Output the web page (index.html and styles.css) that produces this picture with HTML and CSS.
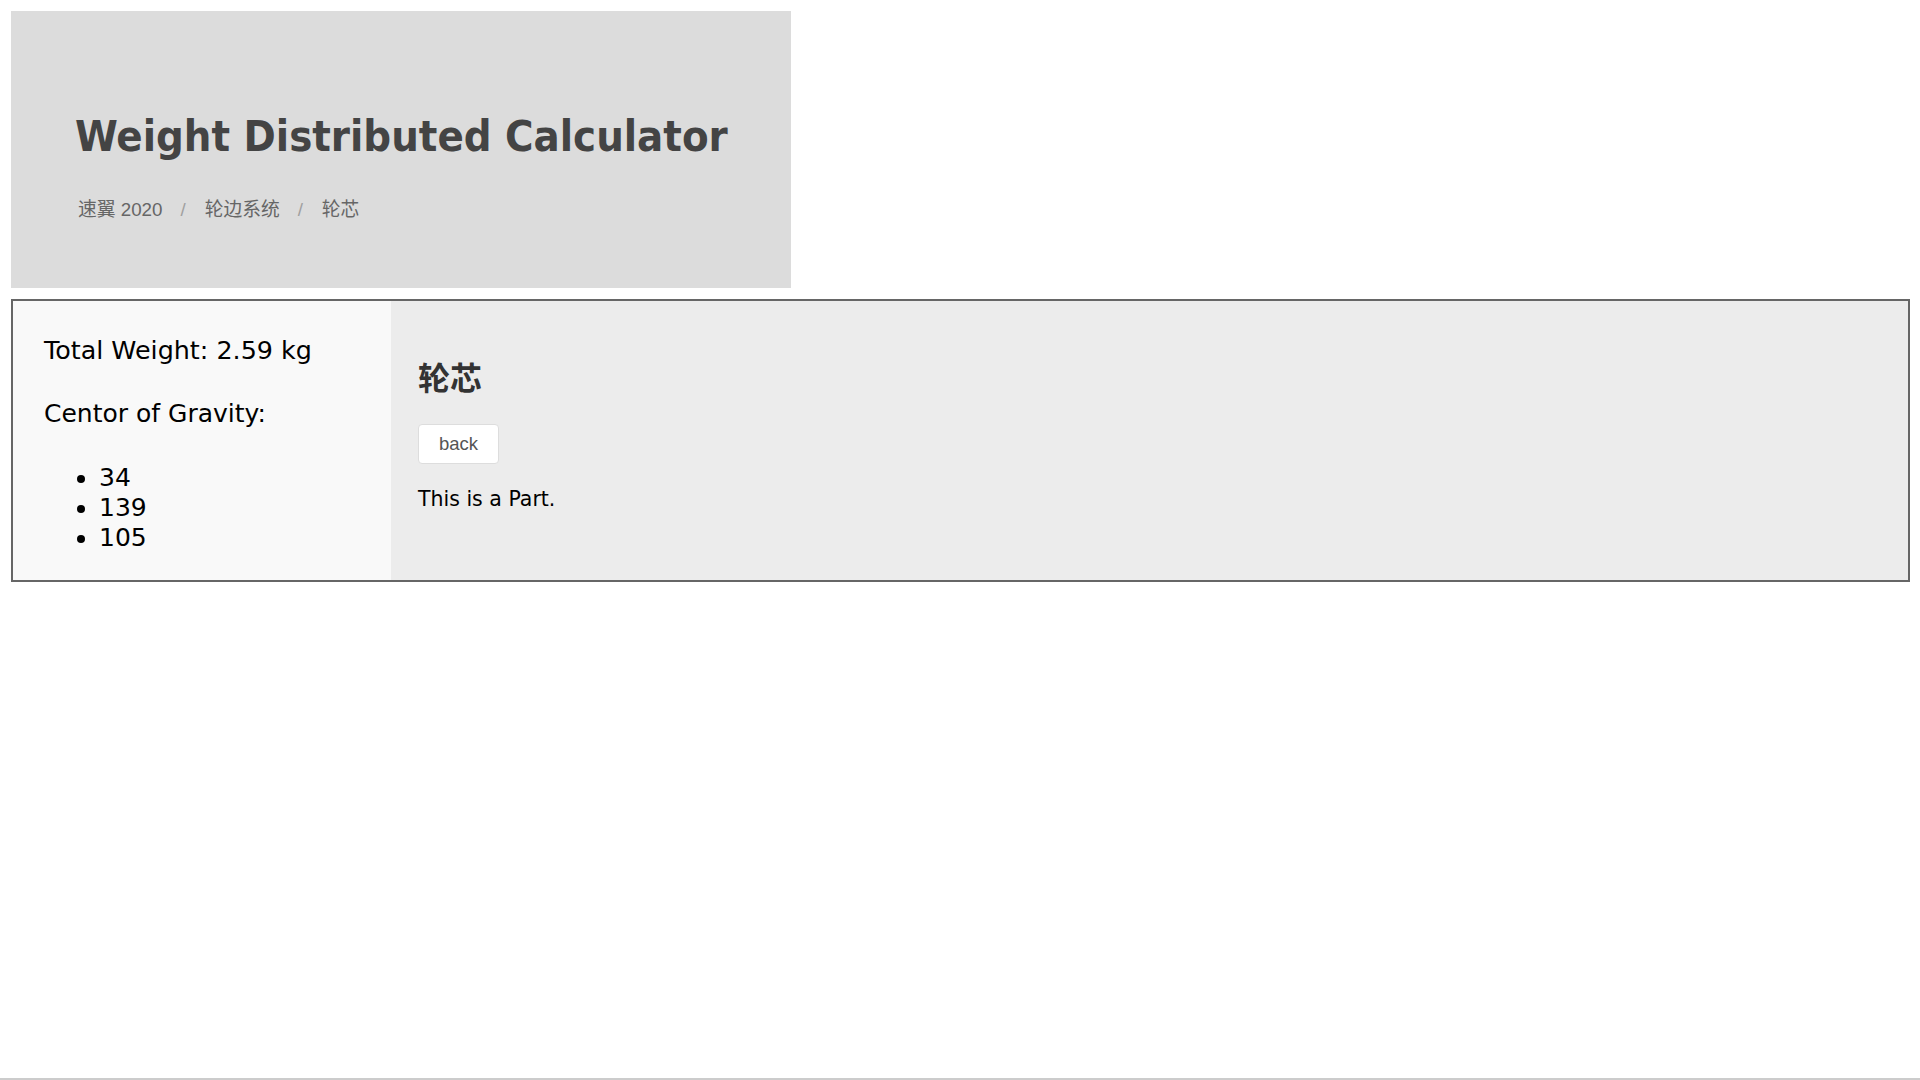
FILE: index.html
```html
<!DOCTYPE html>
<html lang="zh">
<head>
<meta charset="utf-8">
<title>Weight Distributed Calculator</title>
<link rel="stylesheet" href="styles.css">
</head>
<body>
<div class="page">
  <header class="hero">
    <h1 class="hero-title">Weight Distributed Calculator</h1>
    <ol class="crumbs">
      <li class="crumb">速翼 2020</li>
      <li class="crumb-sep">/</li>
      <li class="crumb">轮边系统</li>
      <li class="crumb-sep">/</li>
      <li class="crumb">轮芯</li>
    </ol>
  </header>
  <main class="panel">
    <aside class="summary">
      <div class="stat stat-total">Total Weight: 2.59 kg</div>
      <div class="stat">Centor of Gravity:</div>
      <ul class="cog">
        <li>34</li>
        <li>139</li>
        <li>105</li>
      </ul>
    </aside>
    <section class="detail">
      <h3 class="detail-title">轮芯</h3>
      <button class="back-btn" type="button">back</button>
      <p class="detail-text">This is a Part.</p>
    </section>
  </main>
  <footer class="foot"></footer>
</div>
</body>
</html>
```
FILE: styles.css
```css
html, body {
  margin: 0;
  padding: 0;
  background: #ffffff;
}

.page {
  min-height: 100vh;
  box-sizing: border-box;
  display: flex;
  flex-direction: column;
  padding: 11px 10px 0 11px;
  font-family: "DejaVu Sans", sans-serif;
}

.hero {
  width: 780px;
  height: 277px;
  box-sizing: border-box;
  background: #dcdcdc;
  padding: 101px 0 0 64px;
}

.hero-title {
  margin: 0;
  font-family: "DejaVu Sans Condensed", "DejaVu Sans", sans-serif;
  font-weight: bold;
  font-size: 43.2px;
  line-height: 48px;
  color: #444444;
}

.crumbs {
  list-style: none;
  margin: 38px 0 0 3px;
  padding: 0;
  display: flex;
  font-family: "Liberation Sans", "Noto Sans CJK SC", sans-serif;
  font-size: 18.75px;
  line-height: 24px;
  color: #666666;
}

.crumb-sep {
  color: #a0a0a0;
  margin: 0 19px 0 18px;
}

.panel {
  margin-top: 11px;
  border: 2px solid #666666;
  display: flex;
}

.summary {
  width: 378px;
  flex: none;
  box-sizing: border-box;
  background: #f9f9f9;
  padding: 34px 0 27px 31px;
  color: #000000;
}

.stat {
  font-size: 25px;
  line-height: 30px;
  margin: 0 0 34px;
}

.stat-total {
  font-size: 25.4px;
}

.cog {
  margin: 0;
  padding-left: 55px;
  font-size: 25px;
  line-height: 30px;
}

.detail {
  flex: 1;
  background: #ececec;
  padding: 57px 0 0 27px;
}

.detail-title {
  margin: 0;
  font-family: "Noto Sans CJK SC", sans-serif;
  font-size: 32px;
  font-weight: bold;
  line-height: 36px;
  color: #333333;
}

.back-btn {
  display: block;
  margin-top: 30px;
  height: 40px;
  padding: 0 20px;
  border: 1px solid #dddddd;
  border-radius: 4px;
  background: #ffffff;
  font-family: "Liberation Sans", sans-serif;
  font-size: 18.5px;
  color: #555555;
}

.detail-text {
  margin: 23px 0 0;
  font-size: 20.5px;
  line-height: 24px;
  color: #000000;
}

.foot {
  margin: auto -10px 0 -11px;
  border-top: 2px solid #cccccc;
}
```
